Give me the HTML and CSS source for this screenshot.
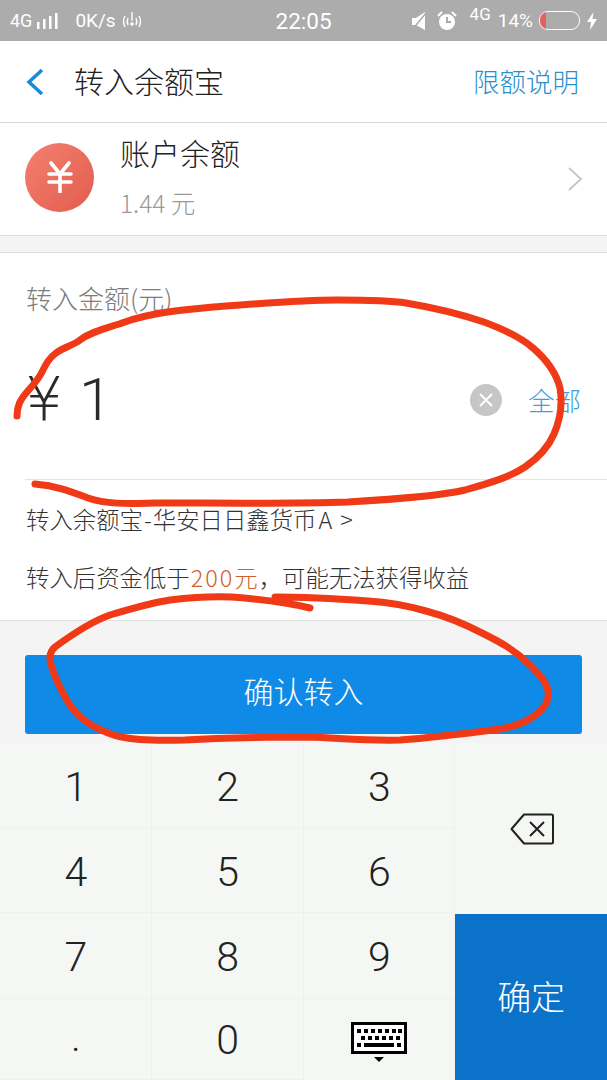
FILE: index.html
```html
<!DOCTYPE html>
<html lang="zh-CN">
<head>
<meta charset="utf-8">
<title>转入余额宝</title>
<link rel="stylesheet" href="styles.css">
</head>
<body>
<div class="page">
  <div class="status">
    <div class="status-left">
      <span class="st-4g">4G</span>
      <svg class="st-bars" width="24" height="18" viewBox="0 0 24 18"><g fill="#fff"><rect x="1" y="10" width="2.5" height="7"/><rect x="7" y="7" width="2.5" height="10"/><rect x="13" y="4" width="2.5" height="13"/><rect x="19" y="1" width="2.5" height="16"/></g></svg>
      <span class="st-speed">0K/s</span>
      <svg class="st-hot" width="22" height="24" viewBox="0 0 22 24"><g fill="none" stroke="#fff" stroke-width="1.4"><path d="M4 7q-3 5 0 11"/><path d="M18 7q3 5 0 11"/><path d="M7 9q-1.6 3.5 0 7"/><path d="M15 9q1.600 3.500 0 7"/><path d="M11 3v9"/></g><circle cx="11" cy="15" r="1.800" fill="#fff"/></svg>
    </div>
    <div class="status-time">22:05</div>
    <div class="status-right">
      <svg width="16" height="20" viewBox="0 0 16 20"><path d="M1 7h4l9-6v18l-9-5H1z" fill="#fff"/><path d="M1 19 15 2" stroke="#acacac" stroke-width="1.500"/></svg>
      <svg class="st-alarm" width="20" height="22" viewBox="0 0 20 22"><circle cx="10" cy="12" r="8" fill="#fff"/><path d="M10 7v5h4" fill="none" stroke="#acacac" stroke-width="2"/><path d="M1 6l4-4M19 6l-4-4" stroke="#fff" stroke-width="2"/></svg>
      <span class="st-4g-up">4G</span>
      <span class="st-pct">14%</span>
      <div class="battery"><div class="battery-level"></div></div>
      <svg class="st-bolt" width="10" height="18" viewBox="0 0 10 18"><path d="M6.500 0 0 10h4l-1 8 7-11H5.500z" fill="#fff"/></svg>
    </div>
  </div>

  <div class="nav">
    <svg class="nav-back" width="20" height="28" viewBox="0 0 20 28"><path d="M17 2 4 14l13 12" fill="none" stroke="#1a8ad8" stroke-width="3.500"/></svg>
    <div class="nav-title">转入余额宝</div>
    <div class="nav-link">限额说明</div>
  </div>

  <div class="account">
    <div class="coin">
      <svg width="28" height="32" viewBox="0 0 28 32"><path d="M5 2l9 11 9-11M3 13h22M3 21h22M14 13v18" fill="none" stroke="#fff" stroke-width="3.600" stroke-linecap="round" stroke-linejoin="round"/></svg>
    </div>
    <div class="account-text">
      <div class="account-name">账户余额</div>
      <div class="account-value">1.44 元</div>
    </div>
    <svg class="chevron" width="16" height="26" viewBox="0 0 16 26"><path d="M2 2l12 11L2 24" fill="none" stroke="#c4c4c4" stroke-width="1.800"/></svg>
  </div>

  <div class="gap"></div>

  <div class="form">
    <div class="form-label">转入金额(元)</div>
    <div class="amount">
      <div class="amount-value"><span class="yen">¥</span>1</div>
      <div class="clear">
        <svg width="16" height="16" viewBox="0 0 16 16"><path d="M2 2l12 12M14 2 2 14" stroke="#fff" stroke-width="2"/></svg>
      </div>
      <div class="all">全部</div>
    </div>
    <div class="fund">转入余额宝<span class="dash">-</span>华安日日鑫货币<span class="fund-a">A</span><span class="fund-arrow">&gt;</span></div>
    <div class="notice">转入后资金低于<span class="warn"><span class="warn-num">200</span>元</span>，可能无法获得收益</div>
  </div>

  <div class="action">
    <div class="confirm">确认转入</div>
  </div>

  <div class="keypad">
    <div class="key">1</div>
    <div class="key">2</div>
    <div class="key">3</div>
    <div class="key key-del">
      <svg width="44" height="32" viewBox="0 0 44 32"><path d="M14 1.500h27.500a1.500 1.500 0 0 1 1.500 1.500v26a1.500 1.500 0 0 1-1.500 1.500H14L1.500 16z" fill="none" stroke="#222" stroke-width="2" stroke-linejoin="round"/><path d="M20 9l14 14M34 9 20 23" stroke="#222" stroke-width="2"/></svg>
    </div>
    <div class="key">4</div>
    <div class="key">5</div>
    <div class="key">6</div>
    <div class="key">7</div>
    <div class="key">8</div>
    <div class="key">9</div>
    <div class="key-ok">确定</div>
    <div class="key key-dot">.</div>
    <div class="key">0</div>
    <div class="key key-board">
      <svg width="56" height="42" viewBox="0 0 56 42"><rect x="1.500" y="1.500" width="53" height="29" fill="#fff" stroke="#000" stroke-width="3"/><g fill="#000"><rect x="6" y="7" width="4" height="4"/><rect x="13" y="7" width="4" height="4"/><rect x="20" y="7" width="4" height="4"/><rect x="27" y="7" width="4" height="4"/><rect x="34" y="7" width="4" height="4"/><rect x="41" y="7" width="4" height="4"/><rect x="47" y="7" width="4" height="4"/><rect x="10" y="14" width="4" height="4"/><rect x="17" y="14" width="4" height="4"/><rect x="24" y="14" width="4" height="4"/><rect x="31" y="14" width="4" height="4"/><rect x="38" y="14" width="4" height="4"/><rect x="45" y="14" width="4" height="4"/><rect x="6" y="21" width="4" height="4"/><rect x="13" y="21" width="30" height="4"/><rect x="46" y="21" width="4" height="4"/><path d="M23 35h10l-5 5z"/></g></svg>
    </div>
  </div>

  <svg class="scribble" width="607" height="1080" viewBox="0 0 607 1080">
    <path d="M17 416C17 406 20 400 27 392C33 385 38 380 42 372C46 364 49 358 56 353C64 347 72 346 80 340C92 331 108 328 125 322C150 313 180 310 213 307C255 304 300 300 337 300C365 300 388 300 406 303C430 307 460 314 484 322C503 329 520 337 533 348C547 360 556 372 560 388C563 405 560 420 554 434C548 448 538 458 525 467C510 477 490 483 465 490C440 496 400 499 348 502C290 504 220 503 155 503C125 504 105 504 88 498C72 492 58 486 35 484" fill="none" stroke="#f03a17" stroke-width="7" stroke-linecap="round" stroke-linejoin="round"/>
    <path d="M310 608C290 603 272 600 232 597C210 596 195 597 170 600C150 603 130 609 110 615C90 622 70 636 55 647C49 652 49 660 52 668C56 680 62 692 68 702C76 716 90 726 108 733C125 740 150 741 185 740C215 738 255 737 310 737C340 738 365 741 400 740C430 738 470 733 500 729C525 725 545 712 548 698C550 685 540 675 530 665C515 650 500 642 484 634C465 624 445 616 426 611C405 605 385 602 368 601C340 599 305 597 275 597" fill="none" stroke="#f03a17" stroke-width="7" stroke-linecap="round" stroke-linejoin="round"/>
  </svg>
</div>
</body>
</html>
```
FILE: styles.css
```css
* { box-sizing: border-box; }
html, body { margin: 0; padding: 0; }
body { width: 607px; height: 1080px; overflow: hidden; background: #f4f4f4; font-family: "Noto Sans CJK SC", "Roboto", sans-serif; }
.page { position: relative; width: 607px; height: 1080px; display: flex; flex-direction: column; }

.status { height: 41px; background: #acacac; color: #fff; display: grid; grid-template-columns: 1fr auto 1fr; align-items: center; font-family: "Roboto", sans-serif; }
.status-left { display: flex; align-items: center; padding-left: 10px; font-size: 18px; }
.st-bars { margin-left: 4px; }
.st-speed { margin-left: 15px; font-size: 19px; }
.st-hot { margin-left: 5px; }
.status-time { font-size: 22.500px; width: 56px; text-align: center; }
.status-right { display: flex; align-items: center; justify-content: flex-end; padding-right: 10px; font-size: 19px; }
.st-alarm { margin-left: 10px; }
.st-4g-up { font-size: 17px; margin: -13px 0 0 13px; }
.st-pct { margin-left: 7px; }
.battery { width: 41px; height: 19px; margin-left: 6px; border: 1.500px solid #fff; border-radius: 9px; overflow: hidden; }
.battery-level { width: 6px; height: 100%; background: #e8605c; }
.st-bolt { margin-left: 7px; }

.nav { height: 82px; background: #fff; border-bottom: 1px solid #d9d9d9; display: flex; align-items: center; padding: 0 28px 3px 25px; }
.nav-back { flex: none; margin-top: 3px; }
.nav-title { margin-left: 29px; font-size: 30px; font-weight: 300; color: #222; flex: 1; }
.nav-link { font-size: 26.500px; font-weight: 300; color: #2b8fcc; }

.account { height: 113px; background: #fff; border-bottom: 1px solid #dedede; display: flex; align-items: center; padding: 0 24px 0 25px; }
.coin { width: 69px; height: 69px; border-radius: 50%; background: linear-gradient(135deg, #f5806f, #e05c4e); display: flex; align-items: center; justify-content: center; flex: none; margin-top: -4px; }
.account-text { margin-left: 26px; flex: 1; display: flex; flex-direction: column; }
.account-name { font-size: 30px; font-weight: 300; color: #222; line-height: 40px; margin-top: -8px; }
.account-value { font-size: 24.500px; font-weight: 300; color: #999; line-height: 32px; margin-top: 15px; }

.gap { height: 17px; background: #f4f4f4; border-bottom: 1px solid #dedede; }

.form { height: 368px; background: #fff; border-bottom: 1px solid #e2e2e2; display: flex; flex-direction: column; }
.form-label { margin: 27px 0 24px 26px; height: 36px; line-height: 36px; font-size: 26px; font-weight: 300; color: #7c7c7c; }
.amount { height: 140px; padding: 0 26px 20px 0; margin-left: 25px; display: flex; align-items: center; border-bottom: 1px solid #e4e4e4; }
.amount-value { flex: 1; display: flex; align-items: baseline; font-family: "Roboto", sans-serif; font-weight: 300; font-size: 60px; color: #2a2a2a; }
.yen { font-family: "DejaVu Sans", sans-serif; font-weight: 200; width: 54px; }
.clear { width: 32px; height: 32px; border-radius: 50%; background: #c6c6c6; display: flex; align-items: center; justify-content: center; }
.all { margin-left: 26px; font-size: 26.500px; font-weight: 300; color: #3d9fdc; }
.fund { height: 79px; line-height: 79px; padding-left: 26px; font-size: 23.400px; font-weight: 300; color: #333; }
.dash { margin: 0 1px; }
.fund-a { margin-left: 2px; }
.fund-arrow { margin-left: 8px; }
.notice { height: 36px; line-height: 36px; padding-left: 26px; font-size: 23.400px; font-weight: 300; color: #333; }
.warn { color: #d2602a; margin-left: 1px; margin-right: 1px; }
.warn-num { letter-spacing: 2px; }

.action { height: 122px; padding: 34px 25px 9px; background: #f4f4f4; }
.confirm { height: 79px; padding-bottom: 10px; background: #0f8ae6; border-radius: 3px; color: #fff; font-size: 30px; font-weight: 300; display: flex; align-items: center; justify-content: center; }

.keypad { flex: 1; display: grid; grid-template-columns: repeat(4, 1fr); grid-template-rows: 86px 84px 86px 1fr; background: #f4f7f3; }
.key { display: flex; align-items: center; justify-content: center; padding: 2px 0 0 1px; font-family: "Roboto", sans-serif; font-weight: 300; font-size: 41px; color: #222; border-right: 1px solid #eef1ee; border-bottom: 1px solid #eef1ee; }
.key-dot { padding-bottom: 6px; }
.key-board { padding-top: 7px; border-bottom: 0; }
.key-del { grid-column: 4; grid-row: 1 / span 2; border-right: 0; border-bottom: 0; }
.key-ok { grid-column: 4; grid-row: 3 / span 2; margin-top: 1px; padding-bottom: 4px; background: #0b72c9; color: #fff; font-size: 34px; font-weight: 300; display: flex; align-items: center; justify-content: center; }
.scribble { position: absolute; left: 0; top: 0; pointer-events: none; }
```
